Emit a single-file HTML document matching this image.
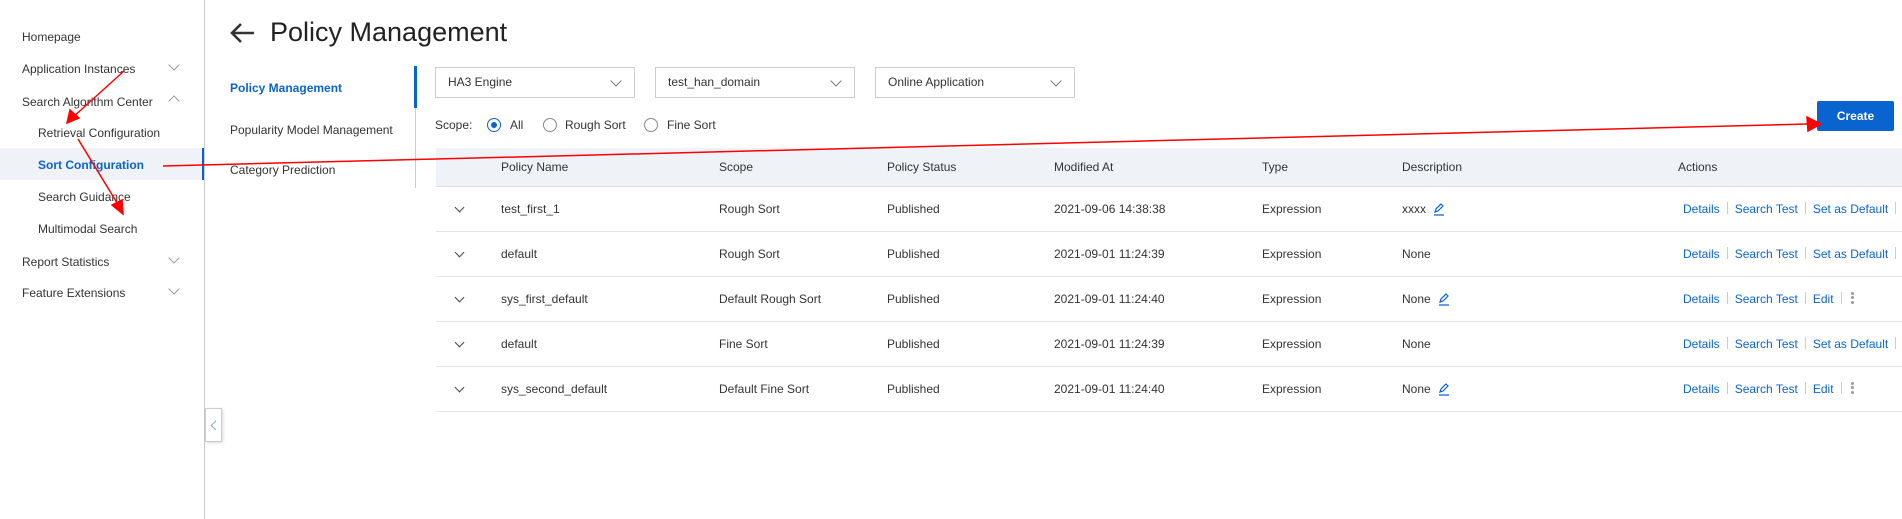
<!DOCTYPE html>
<html><head><meta charset="utf-8"><style>
*{box-sizing:border-box;margin:0;padding:0}
body{width:1902px;height:519px;overflow:hidden;background:#fff;font-family:"Liberation Sans",sans-serif;font-size:12px;color:#333;position:relative}
.a{position:absolute;white-space:nowrap}
.side{position:absolute;left:0;top:0;width:205px;height:519px;border-right:1px solid #ccc}
.mi{position:absolute;left:22px;line-height:20px;color:#333}
.sub{left:38px}
.chev{position:absolute;left:170px;width:8px;height:8px;border-right:1.3px solid #999;border-bottom:1.3px solid #999}
.sel{position:absolute;top:67px;height:31px;border:1px solid #ccc;background:#fff;padding-left:12px;line-height:29px;color:#333}
.sel:after{content:"";position:absolute;right:14px;top:9px;width:7px;height:7px;border-right:1.3px solid #777;border-bottom:1.3px solid #777;transform:rotate(45deg)}
.radio{position:absolute;top:118px;width:14px;height:14px;border-radius:50%;border:1px solid #888}
.th{position:absolute;left:436px;top:148px;width:1466px;height:39px;background:#eff2f7;border-bottom:1px solid #ddd}
.row{position:absolute;left:436px;width:1466px;height:45px;border-bottom:1px solid #e3e3e3}
.c{position:absolute;top:0;line-height:44px;white-space:nowrap}
.lk{color:#0a64d0}
.sp{display:inline-block;width:1px;height:12px;background:#ccc;margin:0 7px;vertical-align:-1px}
.rch{position:absolute;left:20px;top:17px;width:7px;height:7px;border-right:1.4px solid #444;border-bottom:1.4px solid #444;transform:rotate(45deg)}
.pen{display:inline-block;width:14px;height:14px;vertical-align:-3px;margin-left:6px}
.dots{display:inline-block;width:3px;margin-left:2px;vertical-align:-2px}
.dots i{display:block;width:3px;height:3px;border-radius:50%;background:#999;margin-bottom:1.5px}
</style></head><body>
<div class="side">
<div class="mi" style="top:27px">Homepage</div>
<div class="mi" style="top:59px">Application Instances</div><div class="chev" style="top:61px;transform:rotate(45deg)"></div>
<div class="mi" style="top:92px">Search Algorithm Center</div><div class="chev" style="top:97px;transform:rotate(-135deg)"></div>
<div class="mi sub" style="top:123px">Retrieval Configuration</div>
<div style="position:absolute;left:0;top:148px;width:204px;height:32px;background:#eff2f7;border-right:2px solid #0a64d0"></div>
<div class="mi sub" style="top:155px;color:#0a64d0;font-weight:bold">Sort Configuration</div>
<div class="mi sub" style="top:187px">Search Guidance</div>
<div class="mi sub" style="top:219px">Multimodal Search</div>
<div class="mi" style="top:252px">Report Statistics</div><div class="chev" style="top:254px;transform:rotate(45deg)"></div>
<div class="mi" style="top:283px">Feature Extensions</div><div class="chev" style="top:285px;transform:rotate(45deg)"></div>
</div>
<div style="position:absolute;left:205px;top:408px;width:17px;height:34px;border:1px solid #ccc;background:#fff;box-shadow:1px 1px 3px rgba(0,0,0,.15)"><div style="position:absolute;left:6px;top:13px;width:7px;height:7px;border-left:1.3px solid #8ab;border-bottom:1.3px solid #8ab;transform:rotate(45deg)"></div></div>

<svg class="a" style="left:228px;top:20px" width="28" height="26" viewBox="0 0 28 26"><path d="M26 13H4M13 4L4 13l9 9" stroke="#333" stroke-width="2.6" fill="none"/></svg>
<div class="a" style="left:270px;top:14px;font-size:27px;color:#222;line-height:36px">Policy Management</div>

<div class="a" style="left:230px;top:81px;color:#0a64d0;font-weight:bold">Policy Management</div>
<div class="a" style="left:230px;top:123px">Popularity Model Management</div>
<div class="a" style="left:230px;top:163px">Category Prediction</div>
<div style="position:absolute;left:415px;top:66px;width:1px;height:122px;background:#ccc"></div>
<div style="position:absolute;left:414px;top:66px;width:3px;height:42px;background:#0a64d0"></div>

<div class="sel" style="left:435px;width:200px">HA3 Engine</div>
<div class="sel" style="left:655px;width:200px">test_han_domain</div>
<div class="sel" style="left:875px;width:200px">Online Application</div>

<div class="a" style="left:435px;top:118px">Scope:</div>
<div class="radio" style="left:487px;border-color:#0a64d0"><div style="position:absolute;left:3px;top:3px;width:6px;height:6px;border-radius:50%;background:#0a64d0"></div></div>
<div class="a" style="left:510px;top:118px">All</div>
<div class="radio" style="left:543px"></div><div class="a" style="left:565px;top:118px">Rough Sort</div>
<div class="radio" style="left:644px"></div><div class="a" style="left:667px;top:118px">Fine Sort</div>

<div style="position:absolute;left:1817px;top:101px;width:77px;height:30px;background:#0a64d0;border-radius:2px;color:#fff;text-align:center;line-height:30px;font-weight:bold">Create</div>

<div class="th">
<div class="c" style="left:65px;line-height:39px">Policy Name</div>
<div class="c" style="left:283px;line-height:39px">Scope</div>
<div class="c" style="left:451px;line-height:39px">Policy Status</div>
<div class="c" style="left:618px;line-height:39px">Modified At</div>
<div class="c" style="left:826px;line-height:39px">Type</div>
<div class="c" style="left:966px;line-height:39px">Description</div>
<div class="c" style="left:1242px;line-height:39px">Actions</div>
</div>

<div class="row" style="top:187px"><div class="rch"></div><div class="c" style="left:65px">test_first_1</div><div class="c" style="left:283px">Rough Sort</div><div class="c" style="left:451px">Published</div><div class="c" style="left:618px">2021-09-06 14:38:38</div><div class="c" style="left:826px">Expression</div><div class="c" style="left:966px">xxxx<svg class="pen" viewBox="0 0 14 14"><path d="M3 10l1-3 5-5 2 2-5 5zM2 13h10" stroke="#0a64d0" stroke-width="1.2" fill="none"/></svg></div><div class="c lk" style="left:1247px">Details<span class="sp"></span>Search Test<span class="sp"></span>Set as Default<span class="sp"></span></div></div>
<div class="row" style="top:232px"><div class="rch"></div><div class="c" style="left:65px">default</div><div class="c" style="left:283px">Rough Sort</div><div class="c" style="left:451px">Published</div><div class="c" style="left:618px">2021-09-01 11:24:39</div><div class="c" style="left:826px">Expression</div><div class="c" style="left:966px">None</div><div class="c lk" style="left:1247px">Details<span class="sp"></span>Search Test<span class="sp"></span>Set as Default<span class="sp"></span></div></div>
<div class="row" style="top:277px"><div class="rch"></div><div class="c" style="left:65px">sys_first_default</div><div class="c" style="left:283px">Default Rough Sort</div><div class="c" style="left:451px">Published</div><div class="c" style="left:618px">2021-09-01 11:24:40</div><div class="c" style="left:826px">Expression</div><div class="c" style="left:966px">None<svg class="pen" viewBox="0 0 14 14"><path d="M3 10l1-3 5-5 2 2-5 5zM2 13h10" stroke="#0a64d0" stroke-width="1.2" fill="none"/></svg></div><div class="c lk" style="left:1247px">Details<span class="sp"></span>Search Test<span class="sp"></span>Edit<span class="sp"></span><span class="dots"><i></i><i></i><i></i></span></div></div>
<div class="row" style="top:322px"><div class="rch"></div><div class="c" style="left:65px">default</div><div class="c" style="left:283px">Fine Sort</div><div class="c" style="left:451px">Published</div><div class="c" style="left:618px">2021-09-01 11:24:39</div><div class="c" style="left:826px">Expression</div><div class="c" style="left:966px">None</div><div class="c lk" style="left:1247px">Details<span class="sp"></span>Search Test<span class="sp"></span>Set as Default<span class="sp"></span></div></div>
<div class="row" style="top:367px"><div class="rch"></div><div class="c" style="left:65px">sys_second_default</div><div class="c" style="left:283px">Default Fine Sort</div><div class="c" style="left:451px">Published</div><div class="c" style="left:618px">2021-09-01 11:24:40</div><div class="c" style="left:826px">Expression</div><div class="c" style="left:966px">None<svg class="pen" viewBox="0 0 14 14"><path d="M3 10l1-3 5-5 2 2-5 5zM2 13h10" stroke="#0a64d0" stroke-width="1.2" fill="none"/></svg></div><div class="c lk" style="left:1247px">Details<span class="sp"></span>Search Test<span class="sp"></span>Edit<span class="sp"></span><span class="dots"><i></i><i></i><i></i></span></div></div>

<svg class="a" style="left:0;top:0" width="1902" height="519">
<g stroke="#f00" stroke-width="1.5" fill="#f00">
<line x1="124" y1="71" x2="72" y2="118"/><polygon points="67,123 70,110 79,118"/>
<line x1="78" y1="139" x2="119" y2="206"/><polygon points="123,214 112,205 122,200"/>
<line x1="163" y1="166" x2="1808" y2="124"/><polygon points="1821,124 1807,117 1808,131"/>
</g></svg>
</body></html>
